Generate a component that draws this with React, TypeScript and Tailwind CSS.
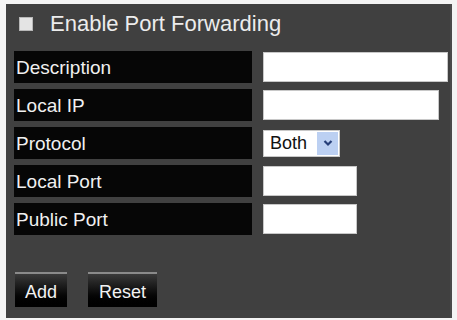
export default function App() {
  const rows = [
    { label: 'Description', kind: 'input', w: 'w-[185px]' },
    { label: 'Local IP', kind: 'input', w: 'w-[176px]' },
    { label: 'Protocol', kind: 'select', w: '' },
    { label: 'Local Port', kind: 'input', w: 'w-[94px]' },
    { label: 'Public Port', kind: 'input', w: 'w-[94px]' },
  ];

  return (
    <div className="w-[457px] h-[320px] bg-[#f4f4f4] pl-[6px] pt-[4px] font-['Liberation_Sans',Arial,sans-serif]">
      <div className="w-[446px] h-[314px] bg-[#404040] border-r-2 border-[#4a4a4a] pl-[8px] pr-[1px] pt-[6px]">
        {/* header */}
        <div className="flex items-center h-[28px] pl-[5px]">
          <div className="w-[14px] h-[14px] bg-[#e4e4e4] border border-[#b8b8b8]" />
          <span className="ml-[17px] text-[22px] text-[#ececec] leading-none">Enable Port Forwarding</span>
        </div>

        <div className="mt-[13px] flex flex-col gap-[6px]">
          {rows.map(row => (
            <div key={row.label} className="flex items-center h-[32px]">
              <div className="w-[238px] shrink-0 h-full bg-[#060606] flex items-center pl-[2px] pt-[2px] text-[19px] text-[#f0f0f0]">
                {row.label}
              </div>
              <div className="ml-[11px] shrink-0">
                {row.kind === 'input' ? (
                  <div className={`${row.w} h-[30px] bg-white border border-[#c8c8c8]`} />
                ) : (
                  <div className="w-[77px] h-[27px] bg-white border border-[#c8c8c8] flex items-center justify-between pl-[6px] pr-[1px]">
                    <span className="text-[18px] text-[#111] leading-none">Both</span>
                    <div className="w-[21px] h-[23px] bg-[#bcd0f2] flex items-center justify-center">
                      <svg width="10" height="8" viewBox="0 0 10 8">
                        <path d="M1.5 2 L5 5.5 L8.5 2" fill="none" stroke="#263e78" strokeWidth="2.2" />
                      </svg>
                    </div>
                  </div>
                )}
              </div>
            </div>
          ))}
        </div>

        <div className="mt-[37px] flex gap-[21px] pl-[1px]">
          <button className="w-[52px] h-[35px] border-t-2 border-[#8a8a8a] bg-gradient-to-b from-[#3a3a3a] via-[#111] to-[#000] text-[18px] text-[#f2f2f2] leading-none pt-[2px]">
            Add
          </button>
          <button className="w-[69px] h-[35px] border-t-2 border-[#8a8a8a] bg-gradient-to-b from-[#3a3a3a] via-[#111] to-[#000] text-[18px] text-[#f2f2f2] leading-none pt-[2px]">
            Reset
          </button>
        </div>
      </div>
    </div>
  );
}
